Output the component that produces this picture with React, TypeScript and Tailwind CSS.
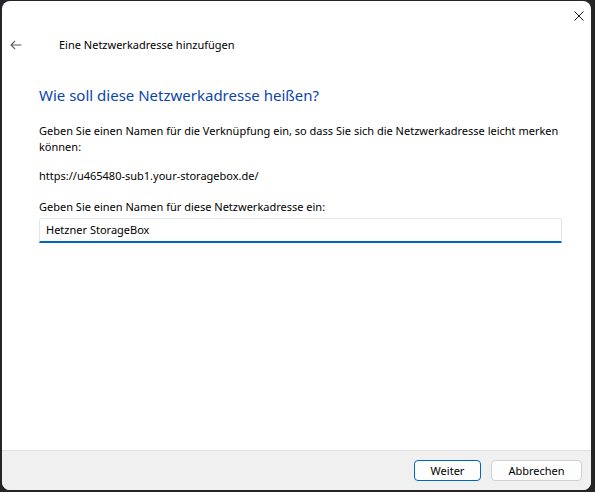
import React from 'react';

const font = { fontFamily: '"Noto Sans", "Open Sans", sans-serif' };

export default function App() {
  return (
    <div className="w-[595px] h-[492px] bg-[#262428] overflow-hidden" style={font}>
      <div className="ml-[2px] mt-[1px] w-[589px] h-[489px] rounded-lg bg-white flex flex-col overflow-hidden text-[11px] text-black">
        <div className="h-[30px] flex items-center justify-end pr-[7px]">
          <svg width="10" height="10" viewBox="0 0 10 10" className="block">
            <path d="M0.5 0.5 L9.5 9.5 M9.5 0.5 L0.5 9.5" stroke="#1a1a1a" strokeWidth="1" />
          </svg>
        </div>

        <div className="h-[28px] flex items-center">
          <svg width="12" height="10" viewBox="0 0 12 10" className="ml-[8px] block">
            <path d="M1 5 H11.5 M5 1 L1 5 L5 9" stroke="#5f5f5f" strokeWidth="1.1" fill="none" />
          </svg>
          <span className="ml-[37px] leading-[16px]">Eine Netzwerkadresse hinzufügen</span>
        </div>

        <div className="pl-[37px] pr-[28px] flex flex-col">
          <h1 className="mt-[25px] text-[15px] leading-[22px] text-[#0a44b0]">
            Wie soll diese Netzwerkadresse heißen?
          </h1>
          <p className="mt-[17px] leading-[16px]">
            Geben Sie einen Namen für die Verknüpfung ein, so dass Sie sich die Netzwerkadresse leicht merken
            können:
          </p>
          <p className="mt-[13px] leading-[16px]">https://u465480-sub1.your-storagebox.de/</p>
          <p className="mt-[15px] leading-[16px]">Geben Sie einen Namen für diese Netzwerkadresse ein:</p>
          <div className="mt-[3px] h-[25px] w-[523px] border border-[#e5e5e5] border-b-2 border-b-[#0067c0] rounded-t-[3px] flex items-center pl-[6px]">
            <span className="leading-[16px]">Hetzner StorageBox</span>
          </div>
        </div>

        <div className="mt-auto h-[40px] bg-[#f0f0f0] border-t border-[#dfdfdf] flex items-center justify-end gap-[10px] pr-[9px]">
          <button className="w-[67px] h-[21px] rounded-[4px] border border-[#0067c0] bg-[#fdfdfd] leading-[16px]">
            Weiter
          </button>
          <button className="w-[91px] h-[21px] rounded-[4px] border border-[#d0d0d0] bg-[#fdfdfd] leading-[16px]">
            Abbrechen
          </button>
        </div>
      </div>
    </div>
  );
}
